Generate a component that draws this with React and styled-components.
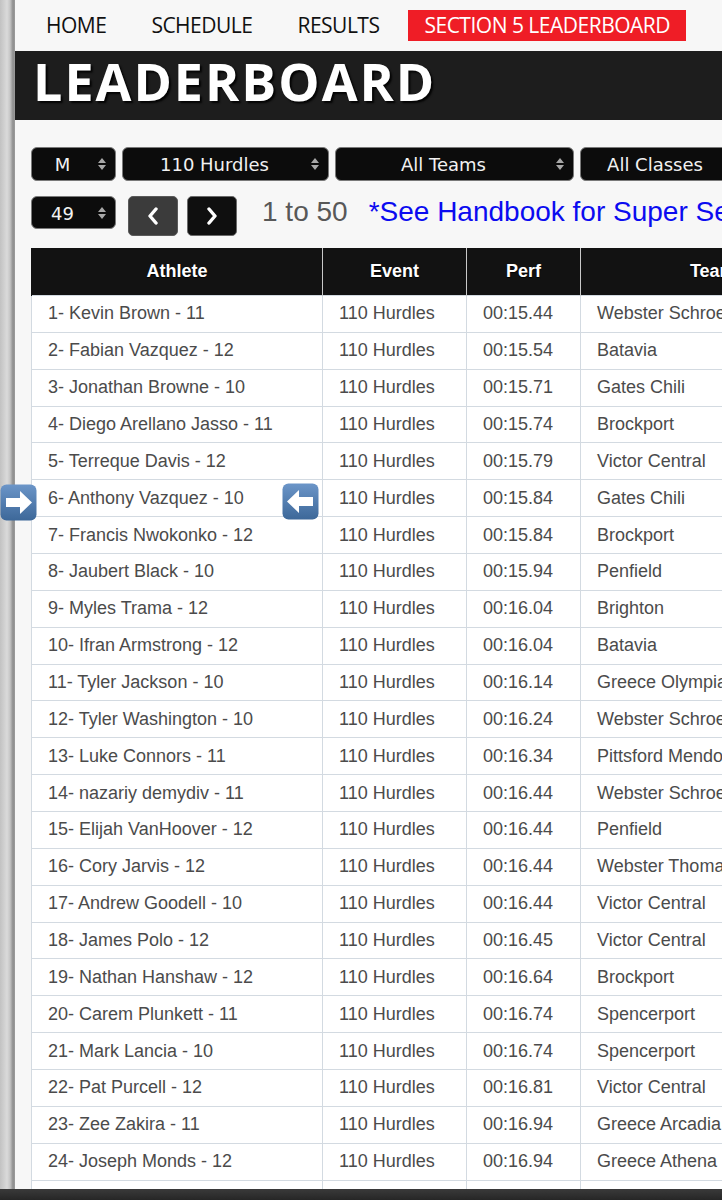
import React from "react";
import styled, { createGlobalStyle } from "styled-components";

const GlobalStyle = createGlobalStyle`
  html, body {
    margin: 0;
    padding: 0;
    overflow: hidden;
    background: #c8c8c8;
  }
  body {
    font-family: "Liberation Sans", Arial, sans-serif;
  }
`;

// cell height without the collapsed 1px border
const ROW_H = 35.87;

const rows = [
  ["1- Kevin Brown - 11", "00:15.44", "Webster Schroeder"],
  ["2- Fabian Vazquez - 12", "00:15.54", "Batavia"],
  ["3- Jonathan Browne - 10", "00:15.71", "Gates Chili"],
  ["4- Diego Arellano Jasso - 11", "00:15.74", "Brockport"],
  ["5- Terreque Davis - 12", "00:15.79", "Victor Central"],
  ["6- Anthony Vazquez - 10", "00:15.84", "Gates Chili"],
  ["7- Francis Nwokonko - 12", "00:15.84", "Brockport"],
  ["8- Jaubert Black - 10", "00:15.94", "Penfield"],
  ["9- Myles Trama - 12", "00:16.04", "Brighton"],
  ["10- Ifran Armstrong - 12", "00:16.04", "Batavia"],
  ["11- Tyler Jackson - 10", "00:16.14", "Greece Olympia"],
  ["12- Tyler Washington - 10", "00:16.24", "Webster Schroeder"],
  ["13- Luke Connors - 11", "00:16.34", "Pittsford Mendon"],
  ["14- nazariy demydiv - 11", "00:16.44", "Webster Schroeder"],
  ["15- Elijah VanHoover - 12", "00:16.44", "Penfield"],
  ["16- Cory Jarvis - 12", "00:16.44", "Webster Thomas"],
  ["17- Andrew Goodell - 10", "00:16.44", "Victor Central"],
  ["18- James Polo - 12", "00:16.45", "Victor Central"],
  ["19- Nathan Hanshaw - 12", "00:16.64", "Brockport"],
  ["20- Carem Plunkett - 11", "00:16.74", "Spencerport"],
  ["21- Mark Lancia - 10", "00:16.74", "Spencerport"],
  ["22- Pat Purcell - 12", "00:16.81", "Victor Central"],
  ["23- Zee Zakira - 11", "00:16.94", "Greece Arcadia"],
  ["24- Joseph Monds - 12", "00:16.94", "Greece Athena"],
  ["25- Noah Rowe - 10", "00:16.94", "Greece Olympia"],
];

// LAYOUT
const Screen = styled.div`
  display: flex;
  width: 722px;
  height: 1200px;
  overflow: hidden;
`;

const Gutter = styled.div`
  flex: 0 0 15px;
  background: linear-gradient(
    to right,
    #c2c2c2 0,
    #dadada 7px,
    #c6c6c6 10px,
    #8e8e8e 13px,
    #9c9c9c 15px
  );
`;

const Page = styled.div`
  flex: 1 1 auto;
  min-width: 0;
  background: #f7f7f7;
`;

// NAV
const Nav = styled.nav`
  display: flex;
  align-items: center;
  gap: 13px;
  height: 51px;
  padding-left: 15px;
`;

const NavItem = styled.a`
  display: block;
  height: 31px;
  line-height: 31px;
  padding: 0 16px;
  font-family: "Open Sans", sans-serif;
  font-size: 21px;
  letter-spacing: -0.5px;
  color: ${(p) => (p.active ? "#ffffff" : "#111111")};
  background: ${(p) => (p.active ? "#ef1d26" : "transparent")};
  text-decoration: none;
`;

const Band = styled.header`
  display: flex;
  align-items: center;
  height: 69px;
  padding: 0 0 9px 18px;
  box-sizing: border-box;
  background: #1d1d1d;
`;

const Title = styled.h1`
  margin: 0;
  font-family: "Open Sans", sans-serif;
  font-weight: 700;
  font-size: 52px;
  line-height: 1;
  letter-spacing: 2px;
  color: #ffffff;
  text-shadow: 2px 2px 2px rgba(0, 0, 0, 0.9);
`;

// CONTROLS
const Controls = styled.div`
  padding: 27px 0 0 16px;
`;

const Row = styled.div`
  display: flex;
  align-items: flex-start;
  gap: ${(p) => p.gap || 6}px;
  margin-top: ${(p) => p.top || 0}px;
  white-space: nowrap;
`;

const Select = styled.div`
  position: relative;
  flex: 0 0 auto;
  width: ${(p) => p.w}px;
  height: ${(p) => p.h || 34}px;
  line-height: ${(p) => p.h || 34}px;
  box-sizing: border-box;
  padding-right: 22px;
  border: 1px solid #7a7a7a;
  border-radius: 6px;
  background: #0c0c0c;
  color: #f2f2f2;
  font-family: "DejaVu Sans", Verdana, sans-serif;
  font-size: 18px;
  text-align: center;
`;

const Arrows = styled.svg`
  position: absolute;
  right: 9px;
  top: 50%;
  margin-top: -6px;
`;

const PageButton = styled.button`
  flex: 0 0 auto;
  display: flex;
  align-items: center;
  justify-content: center;
  width: 50px;
  height: 40px;
  padding: 0;
  border: 1px solid ${(p) => (p.dim ? "#5a5a5a" : "#6a6a6a")};
  border-radius: 5px;
  background: ${(p) => (p.dim ? "#3b3b3b" : "#0f0f0f")};
`;

const Count = styled.span`
  margin-left: ${(p) => p.left}px;
  font-size: 28px;
  line-height: 32px;
  color: ${(p) => p.color};
`;

// TABLE
const TableWrap = styled.div`
  position: relative;
  margin: 12px 0 0 16px;
`;

const Table = styled.table`
  width: 813px;
  table-layout: fixed;
  border-collapse: collapse;
`;

const Th = styled.th`
  height: 47px;
  padding: 0;
  background: #121212;
  color: #ffffff;
  font-size: 18px;
  font-weight: 700;
  text-align: center;
  text-shadow: 0 1px 1px #000;
  border-left: 1px solid #c9c9c9;
  &:first-child {
    border-left-color: #121212;
  }
`;

const Td = styled.td`
  height: ${ROW_H}px;
  padding: 0 16px;
  background: #ffffff;
  color: #4b4b4b;
  font-size: 18px;
  white-space: nowrap;
  overflow: hidden;
  border: 1px solid #d3dae1;
`;

const Marker = styled.svg`
  position: absolute;
  left: ${(p) => p.x}px;
  top: ${(p) => p.y}px;
`;

const BottomBar = styled.div`
  position: fixed;
  left: 0;
  right: 0;
  bottom: 0;
  height: 11px;
  background: linear-gradient(#3a3a3a, #262626);
`;

function UpDown() {
  return (
    <Arrows width="8" height="12" viewBox="0 0 8 12">
      <path d="M0 5 L4 0 L8 5 Z M0 7 L4 12 L8 7 Z" fill="#a8a8a8" />
    </Arrows>
  );
}

function Chevron({ left }) {
  return (
    <svg width="12" height="18" viewBox="0 0 12 18">
      <polyline
        points={left ? "9,2 3,9 9,16" : "3,2 9,9 3,16"}
        fill="none"
        stroke="#ffffff"
        strokeWidth="3.4"
        strokeLinecap="round"
        strokeLinejoin="round"
      />
    </svg>
  );
}

function ArrowEmoji({ x, y, left }) {
  const id = left ? "gl" : "gr";
  return (
    <Marker x={x} y={y} width="37" height="37" viewBox="0 0 37 37">
      <defs>
        <linearGradient id={id} x1="0" y1="0" x2="0" y2="1">
          <stop offset="0" stopColor="#6b95c8" />
          <stop offset="1" stopColor="#3d6899" />
        </linearGradient>
      </defs>
      <rect x="0.5" y="0.5" width="36" height="36" rx="6" fill={`url(#${id})`} />
      <path
        d={
          left
            ? "M31 14 L17 14 L17 7 L5 18.5 L17 30 L17 23 L31 23 Z"
            : "M6 14 L20 14 L20 7 L32 18.5 L20 30 L20 23 L6 23 Z"
        }
        fill="#ffffff"
      />
    </Marker>
  );
}

export default function App() {
  return (
    <>
      <GlobalStyle />
      <Screen>
        <Gutter />
        <Page>
          <Nav>
            <NavItem>HOME</NavItem>
            <NavItem>SCHEDULE</NavItem>
            <NavItem>RESULTS</NavItem>
            <NavItem active>SECTION 5 LEADERBOARD</NavItem>
          </Nav>

          <Band>
            <Title>LEADERBOARD</Title>
          </Band>

          <Controls>
            <Row gap={6}>
              <Select w={85}>
                M<UpDown />
              </Select>
              <Select w={207}>
                110 Hurdles<UpDown />
              </Select>
              <Select w={239}>
                All Teams<UpDown />
              </Select>
              <Select w={172}>
                All Classes<UpDown />
              </Select>
            </Row>

            <Row top={15} gap={9}>
              <Select w={85} h={33}>
                49<UpDown />
              </Select>
              <PageButton dim style={{ marginLeft: 3 }}>
                <Chevron left />
              </PageButton>
              <PageButton>
                <Chevron />
              </PageButton>
              <Count left={16} color="#585858">1 to 50</Count>
              <Count left={12} color="#0b0bf0">
                *See Handbook for Super Sectional Standards
              </Count>
            </Row>
          </Controls>

          <TableWrap>
            <Table>
              <colgroup>
                <col style={{ width: 291 }} />
                <col style={{ width: 144 }} />
                <col style={{ width: 114 }} />
                <col style={{ width: 264 }} />
              </colgroup>
              <thead>
                <tr>
                  <Th>Athlete</Th>
                  <Th>Event</Th>
                  <Th>Perf</Th>
                  <Th>Team</Th>
                </tr>
              </thead>
              <tbody>
                {rows.map(([name, perf, team]) => (
                  <tr key={name}>
                    <Td>{name}</Td>
                    <Td>110 Hurdles</Td>
                    <Td>{perf}</Td>
                    <Td>{team}</Td>
                  </tr>
                ))}
              </tbody>
            </Table>
            <ArrowEmoji x={-31} y={236} />
            <ArrowEmoji x={251} y={235} left />
          </TableWrap>
        </Page>
      </Screen>
      <BottomBar />
    </>
  );
}
